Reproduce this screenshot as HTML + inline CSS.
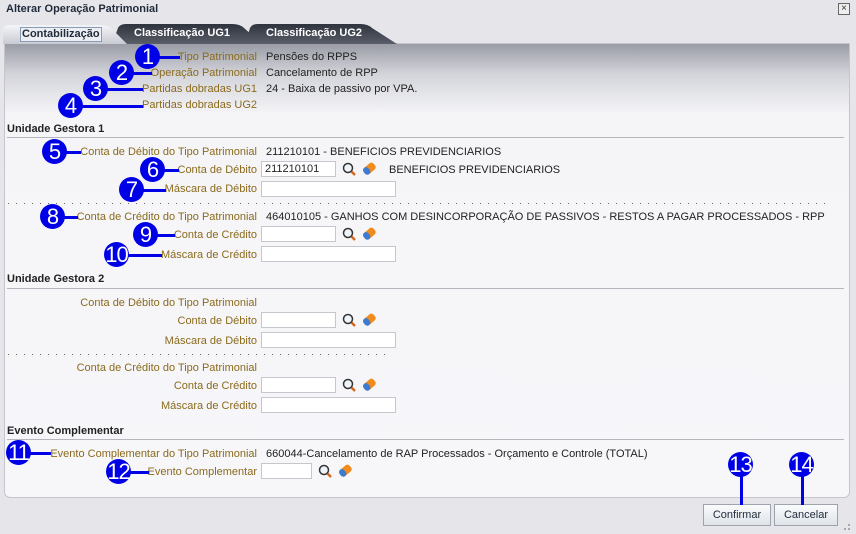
<!DOCTYPE html>
<html><head><meta charset="utf-8"><style>
*{margin:0;padding:0;box-sizing:border-box}
body{width:856px;height:534px;overflow:hidden;background:#e6e6ea;font-family:"Liberation Sans",sans-serif;font-size:11px;color:#222;position:relative}
div,span{position:absolute}
.title{left:6px;top:3px;font-weight:bold;font-size:11px;color:#1f2a3a}
.close{left:838px;top:3px;width:12px;height:12px;border:1px solid #666;background:#eee;font-size:10px;line-height:9px;text-align:center;color:#333}
.panel{left:4px;top:43px;width:846px;height:455px;background:linear-gradient(#9a9ca6 0px,#d3d4da 30px,#f5f5f8 70px,#f7f7fa 100%);border:1px solid #c5c6cc;border-radius:0 0 6px 6px}
.l{right:599px;color:#8a6a1c;white-space:nowrap}
.v{left:266px;white-space:nowrap;color:#222}
.h{left:7px;font-weight:bold;color:#222}
.hl{left:7px;width:837px;height:1px;background:#b5b7bf}
.dots{left:8px;height:1px;background:repeating-linear-gradient(90deg,#666 0 1px,transparent 1px 8px)}
.in{height:16px;background:#fff;border:1px solid #c5c7cc;padding-left:3px;line-height:14px}
.m{width:25px;height:25px;border-radius:50%;background:#0000e6;color:#fff;font-size:22px;line-height:25px;text-align:center;letter-spacing:-1px}
.ln{height:3px;background:#0000e6}
.vl{width:3px;background:#0000e6}
.btn{top:504px;height:22px;border:1px solid #9ea3ad;background:linear-gradient(#fafbfc,#dfe3e9);text-align:center;line-height:20px;color:#1f2a3a}
.tt{top:27px;font-weight:bold;font-size:11px;color:#fff}
</style></head><body>
<div class="title">Alterar Operação Patrimonial</div>
<div class="close">×</div>
<div class="panel"></div>
<svg style="position:absolute;left:0;top:0" width="420" height="46">
<defs><linearGradient id="dk" x1="0" y1="0" x2="0" y2="1"><stop offset="0" stop-color="#2f333d"/><stop offset="1" stop-color="#5a5e69"/></linearGradient>
<linearGradient id="lt" x1="0" y1="0" x2="0" y2="1"><stop offset="0" stop-color="#f4f5f8"/><stop offset="1" stop-color="#c9cbd2"/></linearGradient></defs>
<path d="M245 44 L250 28 Q252 24 258 24 L360 24 Q368 24 372 28 L397 44 Z" fill="url(#dk)"/>
<path d="M112 44 L118 28 Q120 24 126 24 L232 24 Q240 24 244 28 L262 44 Z" fill="url(#dk)"/>
<path d="M3 44 L3 30 Q3 25 9 25 L100 25 Q108 25 112 29 L127 44 Z" fill="url(#lt)"/>
</svg>
<div style="left:20px;top:27px;border:1px solid #8a9bb5;padding:0 1px;font-weight:bold;color:#1f2a3a;line-height:13px;background:#eceef3">Contabilização</div>
<div class="tt" style="left:134px">Classificação UG1</div>
<div class="tt" style="left:266px">Classificação UG2</div>

<div class="l" style="top:51px">Tipo Patrimonial</div><div class="v" style="top:51px">Pensões do RPPS</div>
<div class="l" style="top:67px">Operação Patrimonial</div><div class="v" style="top:67px">Cancelamento de RPP</div>
<div class="l" style="top:83px">Partidas dobradas UG1</div><div class="v" style="top:83px">24 - Baixa de passivo por VPA.</div>
<div class="l" style="top:99px">Partidas dobradas UG2</div>

<div class="h" style="top:123px">Unidade Gestora 1</div><div class="hl" style="top:137px"></div>
<div class="l" style="top:146px">Conta de Débito do Tipo Patrimonial</div><div class="v" style="top:146px">211210101 - BENEFICIOS PREVIDENCIARIOS</div>
<div class="l" style="top:164px">Conta de Débito</div><div class="in" style="left:261px;top:161px;width:75px;line-height:15px">211210101</div>
<div class="v" style="left:389px;top:164px">BENEFICIOS PREVIDENCIARIOS</div>
<div class="l" style="top:183px">Máscara de Débito</div><div class="in" style="left:261px;top:181px;width:135px"></div>
<div class="dots" style="top:203px;width:818px"></div>
<div class="l" style="top:211px">Conta de Crédito do Tipo Patrimonial</div><div class="v" style="top:211px">464010105 - GANHOS COM DESINCORPORAÇÃO DE PASSIVOS - RESTOS A PAGAR PROCESSADOS - RPP</div>
<div class="l" style="top:229px">Conta de Crédito</div><div class="in" style="left:261px;top:226px;width:75px"></div>
<div class="l" style="top:249px">Máscara de Crédito</div><div class="in" style="left:261px;top:246px;width:135px"></div>

<div class="h" style="top:273px">Unidade Gestora 2</div><div class="hl" style="top:288px"></div>
<div class="l" style="top:297px">Conta de Débito do Tipo Patrimonial</div>
<div class="l" style="top:315px">Conta de Débito</div><div class="in" style="left:261px;top:312px;width:75px"></div>
<div class="l" style="top:335px">Máscara de Débito</div><div class="in" style="left:261px;top:332px;width:135px"></div>
<div class="dots" style="top:354px;width:384px"></div>
<div class="l" style="top:362px">Conta de Crédito do Tipo Patrimonial</div>
<div class="l" style="top:380px">Conta de Crédito</div><div class="in" style="left:261px;top:377px;width:75px"></div>
<div class="l" style="top:400px">Máscara de Crédito</div><div class="in" style="left:261px;top:397px;width:135px"></div>

<div class="h" style="top:425px">Evento Complementar</div><div class="hl" style="top:439px"></div>
<div class="l" style="top:448px">Evento Complementar do Tipo Patrimonial</div><div class="v" style="top:448px">660044-Cancelamento de RAP Processados - Orçamento e Controle (TOTAL)</div>
<div class="l" style="top:466px">Evento Complementar</div><div class="in" style="left:261px;top:463px;width:51px"></div>

<svg style="position:absolute;left:0;top:0" width="856" height="534">
<defs>
<g id="mag"><circle cx="6" cy="6" r="4.5" fill="#eef4fa" stroke="#333" stroke-width="1.5"/><line x1="9.5" y1="9.5" x2="13" y2="13" stroke="#d2691e" stroke-width="2.5"/></g>
<g id="er"><g transform="rotate(-40 7 7)"><rect x="1" y="3" width="13" height="8" rx="3" fill="#f08c1e"/><rect x="1" y="3" width="6" height="8" rx="3" fill="#3b7bd4"/></g></g>
</defs>
<use href="#mag" x="342" y="162"/><use href="#er" x="362" y="162"/>
<use href="#mag" x="342" y="227"/><use href="#er" x="362" y="227"/>
<use href="#mag" x="342" y="313"/><use href="#er" x="362" y="313"/>
<use href="#mag" x="342" y="378"/><use href="#er" x="362" y="378"/>
<use href="#mag" x="318" y="464"/><use href="#er" x="338" y="464"/>
<g fill="#aaa"><rect x="848" y="528" width="2" height="2"/><rect x="844" y="528" width="2" height="2"/><rect x="848" y="524" width="2" height="2"/></g>
</svg>

<div class="btn" style="left:703px;width:68px">Confirmar</div>
<div class="btn" style="left:774px;width:64px">Cancelar</div>

<div class="ln" style="left:150px;top:56px;width:30px"></div><div class="m" style="left:135px;top:44px">1</div>
<div class="ln" style="left:124px;top:72px;width:28px"></div><div class="m" style="left:109px;top:60px">2</div>
<div class="ln" style="left:98px;top:88px;width:45px"></div><div class="m" style="left:83px;top:76px">3</div>
<div class="ln" style="left:73px;top:105px;width:70px"></div><div class="m" style="left:58px;top:93px">4</div>
<div class="ln" style="left:57px;top:151px;width:24px"></div><div class="m" style="left:42px;top:139px">5</div>
<div class="ln" style="left:155px;top:169px;width:24px"></div><div class="m" style="left:140px;top:157px">6</div>
<div class="ln" style="left:134px;top:189px;width:32px"></div><div class="m" style="left:119px;top:177px">7</div>
<div class="ln" style="left:55px;top:216px;width:23px"></div><div class="m" style="left:40px;top:204px">8</div>
<div class="ln" style="left:148px;top:234px;width:27px"></div><div class="m" style="left:133px;top:222px">9</div>
<div class="ln" style="left:120px;top:254px;width:42px"></div><div class="m" style="left:104px;top:242px">10</div>
<div class="ln" style="left:22px;top:452px;width:29px"></div><div class="m" style="left:6px;top:440px">11</div>
<div class="ln" style="left:122px;top:471px;width:27px"></div><div class="m" style="left:106px;top:459px">12</div>
<div class="vl" style="left:740px;top:465px;height:40px"></div><div class="m" style="left:728px;top:452px">13</div>
<div class="vl" style="left:801px;top:465px;height:40px"></div><div class="m" style="left:789px;top:452px">14</div>
</body></html>
